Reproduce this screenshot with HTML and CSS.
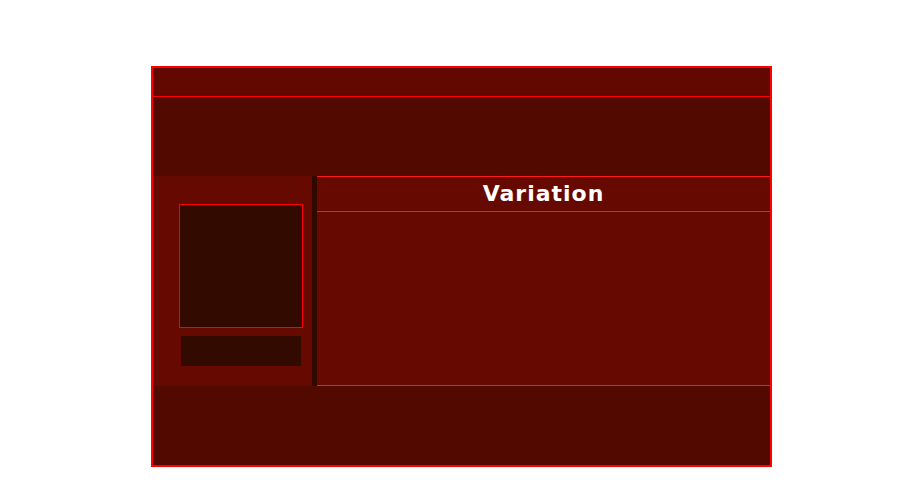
FILE: index.html
```html
<!DOCTYPE html>
<html lang="en">
<head>
    <meta charset="UTF-8">
    <title>Variation</title>
    <link rel="stylesheet" href="styles.css">
</head>
<body>
    <div class="frame">
        <div class="header"></div>
        <div class="band"></div>
        <div class="middle">
            <div class="side">
                <div class="thumb"></div>
                <div class="caption"></div>
            </div>
            <div class="divider"></div>
            <div class="main">
                <div class="title">Variation</div>
                <div class="content"></div>
            </div>
        </div>
        <div class="band"></div>
    </div>
</body>
</html>
```

FILE: styles.css
```css
body {
    margin: 0;
    background: #fff;
    font-family: "DejaVu Sans", Verdana, sans-serif;
}
.frame {
    margin: 66px 0 0 151px;
    width: 617px;
    border: 2px solid #ff0000;
    background: #520900;
}
.header {
    height: 28px;
    background: #630800;
    border-bottom: 1px solid #ff0000;
}
.band {
    height: 79px;
    background: #520900;
}
.middle {
    display: flex;
    height: 210px;
}
.side {
    width: 159px;
    background: #660900;
    padding: 28px 0 0 26px;
    box-sizing: border-box;
}
.thumb {
    width: 122px;
    height: 122px;
    border: 1px solid #ff0000;
    background: #330a00;
}
.caption {
    width: 120px;
    height: 30px;
    margin: 8px 0 0 2px;
    background: #330a00;
}
.divider {
    width: 5px;
    background: #300800;
}
.main {
    flex: 1;
    display: flex;
    flex-direction: column;
    background: #660900;
    border-top: 1px solid #ff1a1a;
    border-bottom: 1px solid #ff1a1a;
}
.title {
    height: 34px;
    line-height: 34px;
    border-bottom: 1px solid #ff1a1a;
    color: #fff;
    font-weight: bold;
    font-size: 22px;
    letter-spacing: 1px;
    text-align: center;
}
.content {
    flex: 1;
}
```
